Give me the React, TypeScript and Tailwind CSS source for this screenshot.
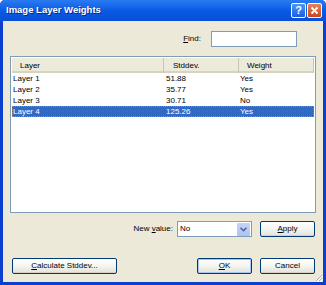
const rows = [
  { layer: "Layer 1", std: "51.88", weight: "Yes" },
  { layer: "Layer 2", std: "35.77", weight: "Yes" },
  { layer: "Layer 3", std: "30.71", weight: "No" },
  { layer: "Layer 4", std: "125.26", weight: "Yes", selected: true },
];

function XpButton({
  children,
  className = "",
  isDefault = false,
}: {
  children: React.ReactNode;
  className?: string;
  isDefault?: boolean;
}) {
  return (
    <button
      className={`flex h-[16px] items-center justify-center rounded-[2px] border border-[#003c74] bg-gradient-to-b from-white via-[#f4f4f0] to-[#e3e3db] text-[8px] leading-none text-black ${
        isDefault ? "shadow-[inset_0_0_0_1px_#a8c4ef]" : "shadow-[inset_0_-1px_0_#d6d0c5]"
      } ${className}`}
    >
      {children}
    </button>
  );
}

export default function App() {
  return (
    <div
      className="flex h-[285px] w-[326px] flex-col overflow-hidden rounded-t-[5px] bg-[#0b3fd0] text-black"
      style={{ fontFamily: '"Liberation Sans", Arial, sans-serif' }}
    >
      {/* title bar */}
      <div className="flex h-[21px] shrink-0 items-center bg-gradient-to-b from-[#2a7bf0] via-[#0a5ae3] to-[#0a4fd6] pl-[6px] pr-[4px]">
        <span className="flex-1 text-[9.5px] font-bold text-white [text-shadow:1px_1px_0_#0a2a8a]">
          Image Layer Weights
        </span>
        <div className="flex gap-[1px]">
          <div className="flex h-[15px] w-[15px] items-center justify-center rounded-[2px] border border-white bg-gradient-to-b from-[#4b98f7] to-[#1b5de0] text-[11px] font-bold leading-none text-white">
            ?
          </div>
          <div className="flex h-[15px] w-[15px] items-center justify-center rounded-[2px] border border-white bg-gradient-to-b from-[#e8825a] to-[#c9441d]">
            <svg width="9" height="9" viewBox="0 0 9 9">
              <path d="M1.5 1.5 L7.5 7.5 M7.5 1.5 L1.5 7.5" stroke="white" strokeWidth="1.8" />
            </svg>
          </div>
        </div>
      </div>

      {/* client area */}
      <div className="relative mx-[3px] mb-[3px] flex flex-1 flex-col bg-[#ece9d8]">
        <div className="mt-[10px] flex h-[16px] items-center justify-end pr-[26px]">
          <span className="mr-[10px] text-[8px]">
            <u>F</u>ind:
          </span>
          <div className="h-[16px] w-[86px] border border-[#7f9db9] bg-white" />
        </div>

        {/* list */}
        <div className="mx-[7px] mt-[9px] flex h-[157px] flex-col border border-[#7f9db9] bg-white p-[1px]">
          <div className="flex h-[15px] shrink-0 items-stretch bg-[#ebeadb] text-[8px] shadow-[inset_0_-2px_0_#d6d3c0]">
            <div className="flex w-[152px] items-center border-r border-[#c7c5b2] pl-[8px]">Layer</div>
            <div className="flex w-[75px] items-center border-r border-[#c7c5b2] pl-[9px]">Stddev.</div>
            <div className="flex w-[75px] items-center border-r border-[#c7c5b2] pl-[8px]">Weight</div>
          </div>
          {rows.map((r) => (
            <div
              key={r.layer}
              className={`flex h-[11px] items-center text-[8px] leading-none ${
                r.selected ? "bg-[#316ac5] text-white outline-1 outline-dotted outline-[#8c8c8c] -outline-offset-1" : ""
              }`}
            >
              <div className="w-[154px] pl-[1px]">{r.layer}</div>
              <div className="w-[74px]">{r.std}</div>
              <div>{r.weight}</div>
            </div>
          ))}
        </div>

        {/* new value row */}
        <div className="mt-[8px] flex h-[16px] items-center justify-end pr-[8px]">
          <span className="mr-[4px] text-[8px]">
            New <u>v</u>alue:
          </span>
          <div className="flex h-[16px] w-[75px] items-center border border-[#7f9db9] bg-white pl-[2px] pr-[1px]">
            <span className="flex-1 text-[8px]">No</span>
            <div className="flex h-[13px] w-[13px] items-center justify-center rounded-[1px] bg-gradient-to-b from-[#c6d3f7] to-[#aec3f3]">
              <svg width="7" height="5" viewBox="0 0 7 5">
                <path d="M0.5 0.8 L3.5 3.8 L6.5 0.8" stroke="#4d6185" strokeWidth="1.5" fill="none" />
              </svg>
            </div>
          </div>
          <XpButton className="ml-[8px] w-[55px]">
            <u>A</u>pply
          </XpButton>
        </div>

        {/* bottom buttons */}
        <div className="mt-[21px] flex h-[16px] items-center pl-[9px] pr-[8px]">
          <XpButton className="w-[105px]">
            <u>C</u>alculate Stddev...
          </XpButton>
          <div className="flex-1" />
          <XpButton isDefault className="w-[55px]">
            <u>O</u>K
          </XpButton>
          <XpButton className="ml-[8px] w-[55px]">Cancel</XpButton>
        </div>

        {/* resize grip */}
        <svg className="absolute bottom-0 right-0" width="9" height="9" viewBox="0 0 9 9">
          <path d="M8 2 L2 8 M8 5 L5 8 M8 8 L8 8" stroke="#b9b5a4" strokeWidth="1" />
          <path d="M9 3 L3 9 M9 6 L6 9" stroke="#ffffff" strokeWidth="1" />
        </svg>
      </div>
    </div>
  );
}
